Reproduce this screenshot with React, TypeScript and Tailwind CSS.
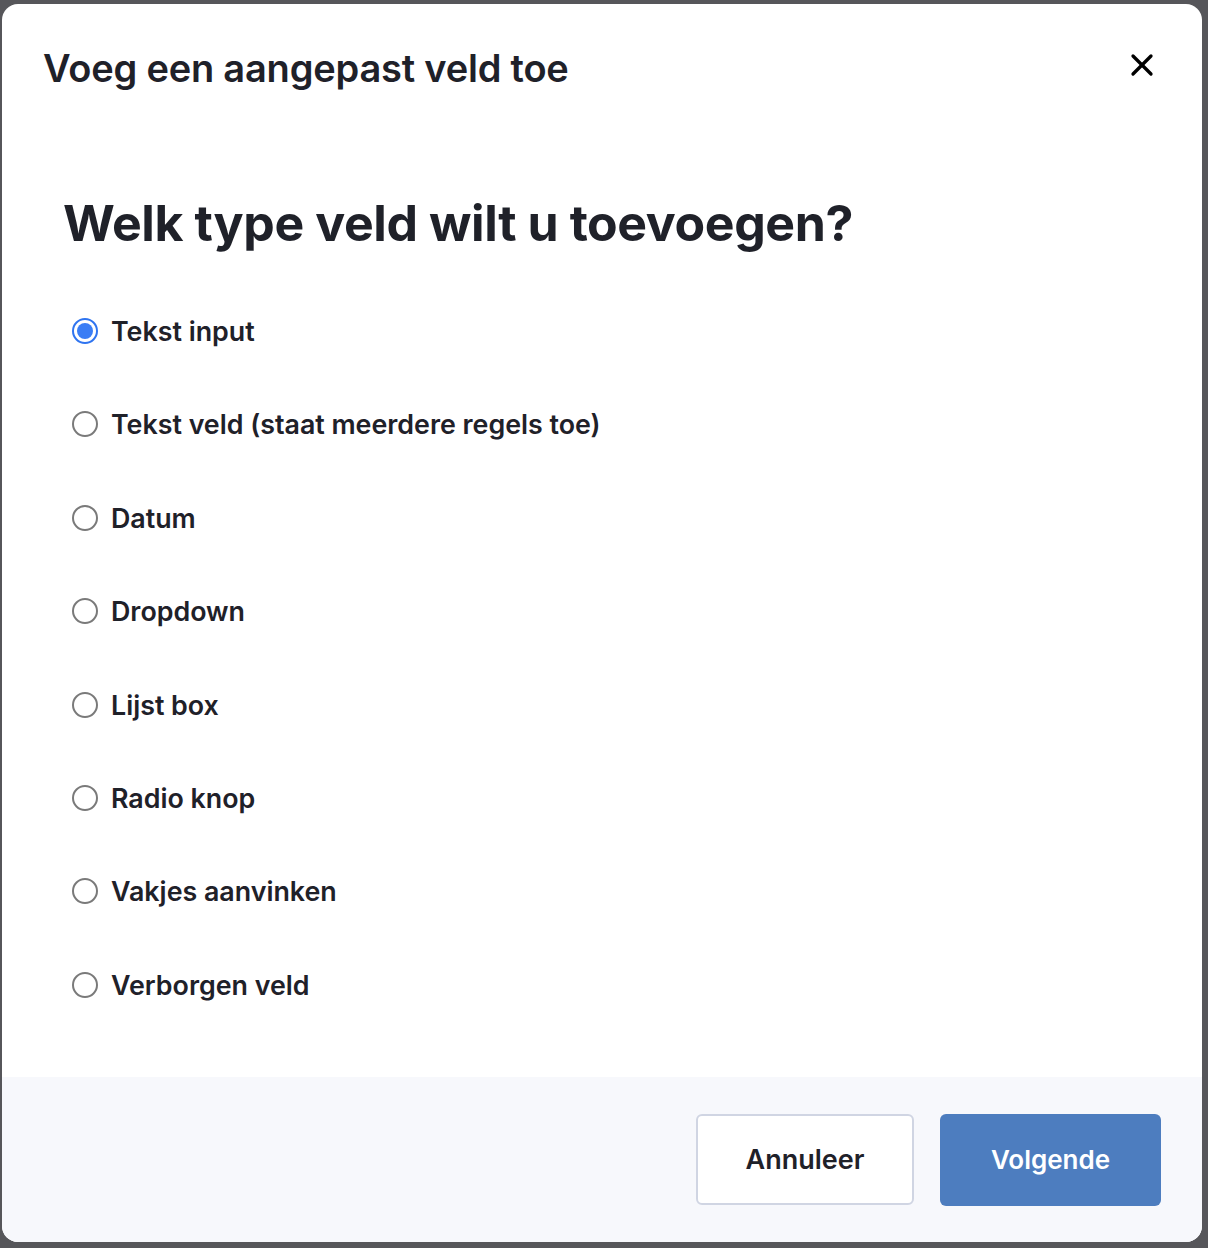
import { X } from 'lucide-react'

const options = [
  'Tekst input',
  'Tekst veld (staat meerdere regels toe)',
  'Datum',
  'Dropdown',
  'Lijst box',
  'Radio knop',
  'Vakjes aanvinken',
  'Verborgen veld',
]

function Radio({ checked }: { checked: boolean }) {
  if (checked) {
    return (
      <span className="flex h-[26px] w-[26px] shrink-0 items-center justify-center rounded-full border-[2px] border-[#2f74f0] bg-white">
        <span className="h-[16px] w-[16px] rounded-full bg-[#3a7df5]" />
      </span>
    )
  }
  return <span className="h-[26px] w-[26px] shrink-0 rounded-full border-[2px] border-[#7a7a7a] bg-white" />
}

export default function App() {
  return (
    <div
      className="h-[1248px] w-full bg-[#56565a] pl-[2px] pt-[4px]"
      style={{ fontFamily: 'Inter, "Noto Sans", sans-serif' }}
    >
      <div className="flex h-[1238px] w-[1200px] flex-col overflow-hidden rounded-[16px] bg-white text-[#1f2129]">
        <div className="flex items-center justify-between px-[41px] pt-[40px]">
          <h1 className="text-[38px] font-semibold leading-[48px] tracking-[-0.2px]">Voeg een aangepast veld toe</h1>
          <button className="mr-[1px] mt-[-6px] text-black">
            <X size={36} strokeWidth={2.2} />
          </button>
        </div>

        <div className="flex-1 px-[61px] pt-[101px]">
          <h2 className="text-[50px] font-bold leading-[60px] tracking-[-0.4px]">Welk type veld wilt u toevoegen?</h2>
          <div className="mt-[62px] flex flex-col gap-[61.4px] pl-[9px]">
            {options.map((o, i) => (
              <label key={o} className="flex h-[32px] items-center gap-[13px]">
                <Radio checked={i === 0} />
                <span className="text-[26.8px] font-semibold leading-[32px]">{o}</span>
              </label>
            ))}
          </div>
        </div>

        <div className="flex h-[165px] items-center justify-end gap-[26px] bg-[#f7f8fc] px-[41px]">
          <button className="h-[91px] w-[218px] rounded-[6px] border-[2px] border-[#d0d5e3] bg-white pt-[2px] text-[27px] font-semibold text-[#1f2129]">
            Annuleer
          </button>
          <button className="h-[92px] w-[221px] rounded-[6px] bg-[#4d7dbf] text-[26px] font-semibold text-white">
            Volgende
          </button>
        </div>
      </div>
    </div>
  )
}
